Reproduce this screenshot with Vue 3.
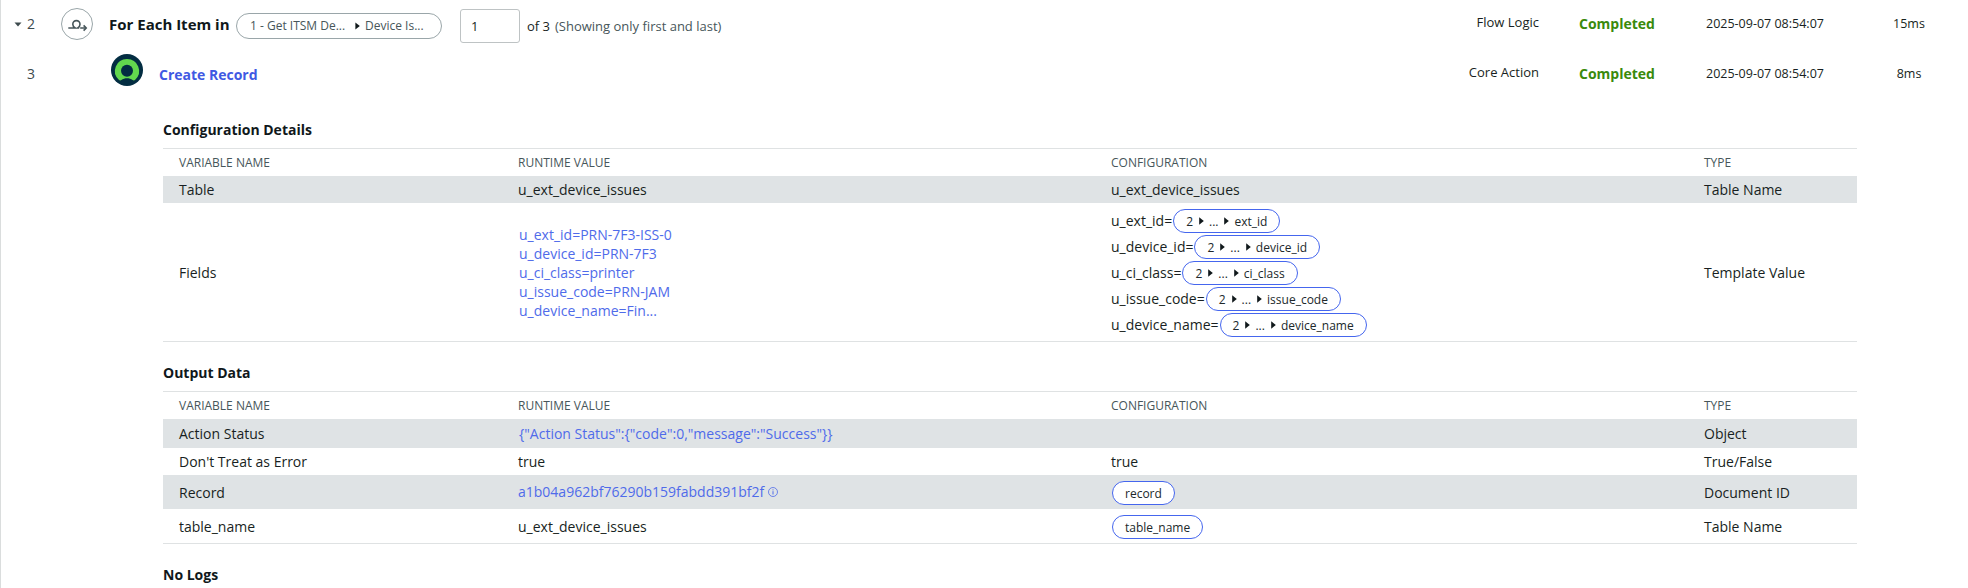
<script setup>
const configRows = [
  { name: 'Table', kind: 'plain', runtime: 'u_ext_device_issues', config: 'u_ext_device_issues', type: 'Table Name', size: 'h27', shaded: true },
  {
    name: 'Fields',
    kind: 'fields',
    runtimeLines: ['u_ext_id=PRN-7F3-ISS-0', 'u_device_id=PRN-7F3', 'u_ci_class=printer', 'u_issue_code=PRN-JAM', 'u_device_name=Fin...'],
    pills: ['ext_id', 'device_id', 'ci_class', 'issue_code', 'device_name'],
    type: 'Template Value',
    size: 'h138',
  },
]
const outputRows = [
  { name: 'Action Status', kind: 'json', runtime: '{"Action Status":{"code":0,"message":"Success"}}', type: 'Object', size: 'h29', shaded: true },
  { name: "Don't Treat as Error", kind: 'plain', runtime: 'true', config: 'true', type: 'True/False', size: 'h27' },
  { name: 'Record', kind: 'record', runtime: 'a1b04a962bf76290b159fabdd391bf2f', pill: 'record', type: 'Document ID', size: 'h34', shaded: true },
  { name: 'table_name', kind: 'plain', runtime: 'u_ext_device_issues', pill: 'table_name', type: 'Table Name', size: 'h34' },
]
const sections = [
  { title: 'Configuration Details', rows: configRows },
  { title: 'Output Data', rows: outputRows },
]
</script>

<template>
  <main class="flow">
    <div class="step first">
      <div class="index"><svg class="caret" width="8" height="5" viewBox="0 0 8 5"><path d="M0.5 0.5h7L4 4.5z" fill="#3c4a4d" /></svg><span>2</span></div>
      <div class="logic-icon">
        <svg width="20" height="14" viewBox="0 0 20 14" fill="none" stroke="#47565a" stroke-width="1.6">
          <path d="M0.3 9H7.2C5.8 8.2 4.8 6.9 4.8 5.2A3.6 3.6 0 0 1 12 5.2C12 6.8 11.2 8 9.8 9H11.2M12.2 9H18" />
          <path d="M15.6 6.4L18.2 9L15.6 11.6" />
        </svg>
      </div>
      <h2 class="loop-title">For Each Item in</h2>
      <div class="source-pill">
        <span class="src-a">1 - Get ITSM De...</span>
        <svg width="5" height="8" viewBox="0 0 5 8"><path d="M0.4 0.4L4.8 4L0.4 7.6z" fill="#10181b" /></svg>
        <span class="src-b">Device Is...</span>
      </div>
      <input class="page" value="1" aria-label="Iteration" />
      <span class="of">of 3</span>
      <span class="note">(Showing only first and last)</span>
      <div class="meta">
        <span class="kind">Flow Logic</span><b class="state">Completed</b><span class="date">2025-09-07 08:54:07</span><span class="took">15ms</span>
      </div>
    </div>
    <div class="step second">
      <div class="index"><span>3</span></div>
      <svg class="action-icon" width="32" height="32" viewBox="0 0 32 32">
        <circle cx="16" cy="16" r="16" fill="#032d42" />
        <path d="M16 5A12 12 0 0 0 7.8 25.8C8.5 26.5 9.6 26.6 10.4 26C12 24.9 13.9 24.3 16 24.3S20 24.9 21.6 26C22.4 26.6 23.5 26.5 24.2 25.8A12 12 0 0 0 16 5z" fill="#62d84e" />
        <circle cx="16" cy="16.8" r="6" fill="#032d42" />
      </svg>
      <h2 class="action-title">Create Record</h2>
      <div class="meta">
        <span class="kind">Core Action</span><b class="state">Completed</b><span class="date">2025-09-07 08:54:07</span><span class="took">8ms</span>
      </div>
    </div>

    <section v-for="s in sections" :key="s.title" class="details">
      <h3>{{ s.title }}</h3>
      <div class="table">
        <div class="row head"><span>VARIABLE NAME</span><span>RUNTIME VALUE</span><span>CONFIGURATION</span><span>TYPE</span></div>
        <div v-for="r in s.rows" :key="r.name" class="row" :class="[r.size, { shaded: r.shaded }]">
          <div>{{ r.name }}</div>
          <div v-if="r.kind === 'fields'" class="link inset">
            <div v-for="l in r.runtimeLines" :key="l" class="line">{{ l }}</div>
          </div>
          <div v-else-if="r.kind === 'json'" class="link inset">{{ r.runtime }}</div>
          <div v-else-if="r.kind === 'record'" class="link record">
            <span>{{ r.runtime }}</span>
            <svg width="10" height="10" viewBox="0 0 10 10" fill="none" stroke="#4f6bea"><circle cx="5" cy="5" r="4.5" stroke-width=".8" /><path d="M5 4.2v3.3M5 2.4v1" /></svg>
          </div>
          <div v-else>{{ r.runtime }}</div>
          <div v-if="r.pills">
            <div v-for="p in r.pills" :key="p" class="mapping">
              <span>u_{{ p }}=</span>
              <span class="pill chain">2<svg class="arrow" width="5" height="8" viewBox="0 0 5 8"><path d="M0.2 0.2L4.8 4L0.2 7.8z" fill="#10181b" /></svg><span class="dots">...</span><svg class="arrow" width="5" height="8" viewBox="0 0 5 8"><path d="M0.2 0.2L4.8 4L0.2 7.8z" fill="#10181b" /></svg>{{ p }}</span>
            </div>
          </div>
          <div v-else-if="r.pill" class="single"><span class="pill">{{ r.pill }}</span></div>
          <div v-else>{{ r.config }}</div>
          <div>{{ r.type }}</div>
        </div>
      </div>
    </section>
    <h3 class="logs">No Logs</h3>
  </main>
</template>

<style>
body { background: #fff; }
</style>
<style scoped>
* { box-sizing: border-box; }
.flow { height: 588px; overflow: hidden; border-left: 1px solid #dadddd; font: 14px/20px "Open Sans", "Noto Sans", sans-serif; color: #181f22; }
h2, h3 { margin: 0; }
.step { display: flex; align-items: flex-start; white-space: nowrap; }
.first { height: 50px; }
.second { height: 50px; }
.index { width: 60px; height: 48px; display: flex; align-items: center; color: #3c4a4d; }
.index span { margin-left: 5px; }
.second .index span { margin-left: 26px; }
.caret { margin-left: 13px; }
.logic-icon { width: 32px; height: 32px; margin-top: 8px; border: 1px solid #9aa6a9; border-radius: 50%; display: flex; padding: 10px 0 0 6px; }
.logic-icon svg { flex: none; }
.loop-title { font-size: 15px; line-height: 20px; margin: 14px 0 0 16px; width: 127px; color: #10181b; }
.source-pill { width: 206px; height: 26px; margin-top: 13px; border: 1px solid #9aa6a9; border-radius: 13px; display: flex; align-items: center; padding: 0 0 1px 13px; font-size: 12px; color: #47565a; }
.src-a { width: 105px; }
.src-b { margin-left: 5px; }
.page { width: 60px; height: 34px; margin: 9px 0 0 18px; border: 1px solid #bec3c4; border-radius: 3px; padding: 0 10px; font: inherit; font-size: 13px; color: inherit; background: #fff; }
.of { margin: 16px 0 0 7px; width: 28px; font-size: 13px; }
.note { margin-top: 16px; font-size: 13px; color: #47565a; }
.meta { margin-left: auto; width: 530px; display: flex; font-size: 13px; }
.kind { width: 101px; text-align: right; margin-top: 12px; }
.state { width: 127px; margin: 14px 0 0 40px; font-size: 14px; color: #3a8a0b; }
.date { width: 144px; margin-top: 14px; font-size: 12.5px; }
.took { width: 118px; margin-top: 14px; text-align: center; font-size: 12.5px; }
.action-icon { margin: 4px 0 0 50px; }
.action-title { margin: 15px 0 0 16px; font-size: 14px; line-height: 20px; color: #4059e3; }
.details { margin-left: 162px; width: 1694px; }
.details h3, .logs { font-size: 14px; line-height: 20px; color: #10181b; }
.details h3 { padding-top: 20px; height: 48px; }
.details + .details h3 { height: 49px; padding-top: 21px; }
.logs { margin: 21px 0 0 162px; }
.table { border-top: 1px solid #dfe2e3; border-bottom: 1px solid #dfe2e3; }
.row { display: grid; grid-template-columns: 339px 593px 593px 1fr; align-items: center; }
.row > * { padding-left: 16px; }
.head { height: 27px; font-size: 12px; color: #47565a; }
.h27 { height: 27px; }
.h29 { height: 29px; }
.h34 { height: 34px; padding-top: 2px; }
.h138 { height: 138px; padding-top: 2px; }
.shaded { background: #dfe3e5; }
.link { color: #4f6bea; }
.row > .inset { padding-left: 17px; }
.h138 > .inset { margin-top: -2px; }
.line { line-height: 19px; }
.record { display: flex; align-items: center; gap: 4px; margin-top: -2px; }
.mapping { height: 26px; display: flex; align-items: center; }
.pill { display: inline-flex; align-items: center; height: 24px; padding: 1px 12px 0; border: 1px solid #4566ee; border-radius: 12px; background: #fff; font-size: 12px; color: #20282b; }
.chain { margin-left: 1px; }
.row > .single { padding-left: 17px; display: flex; }
.arrow { margin: -1px 5px 0 6px; }
</style>
